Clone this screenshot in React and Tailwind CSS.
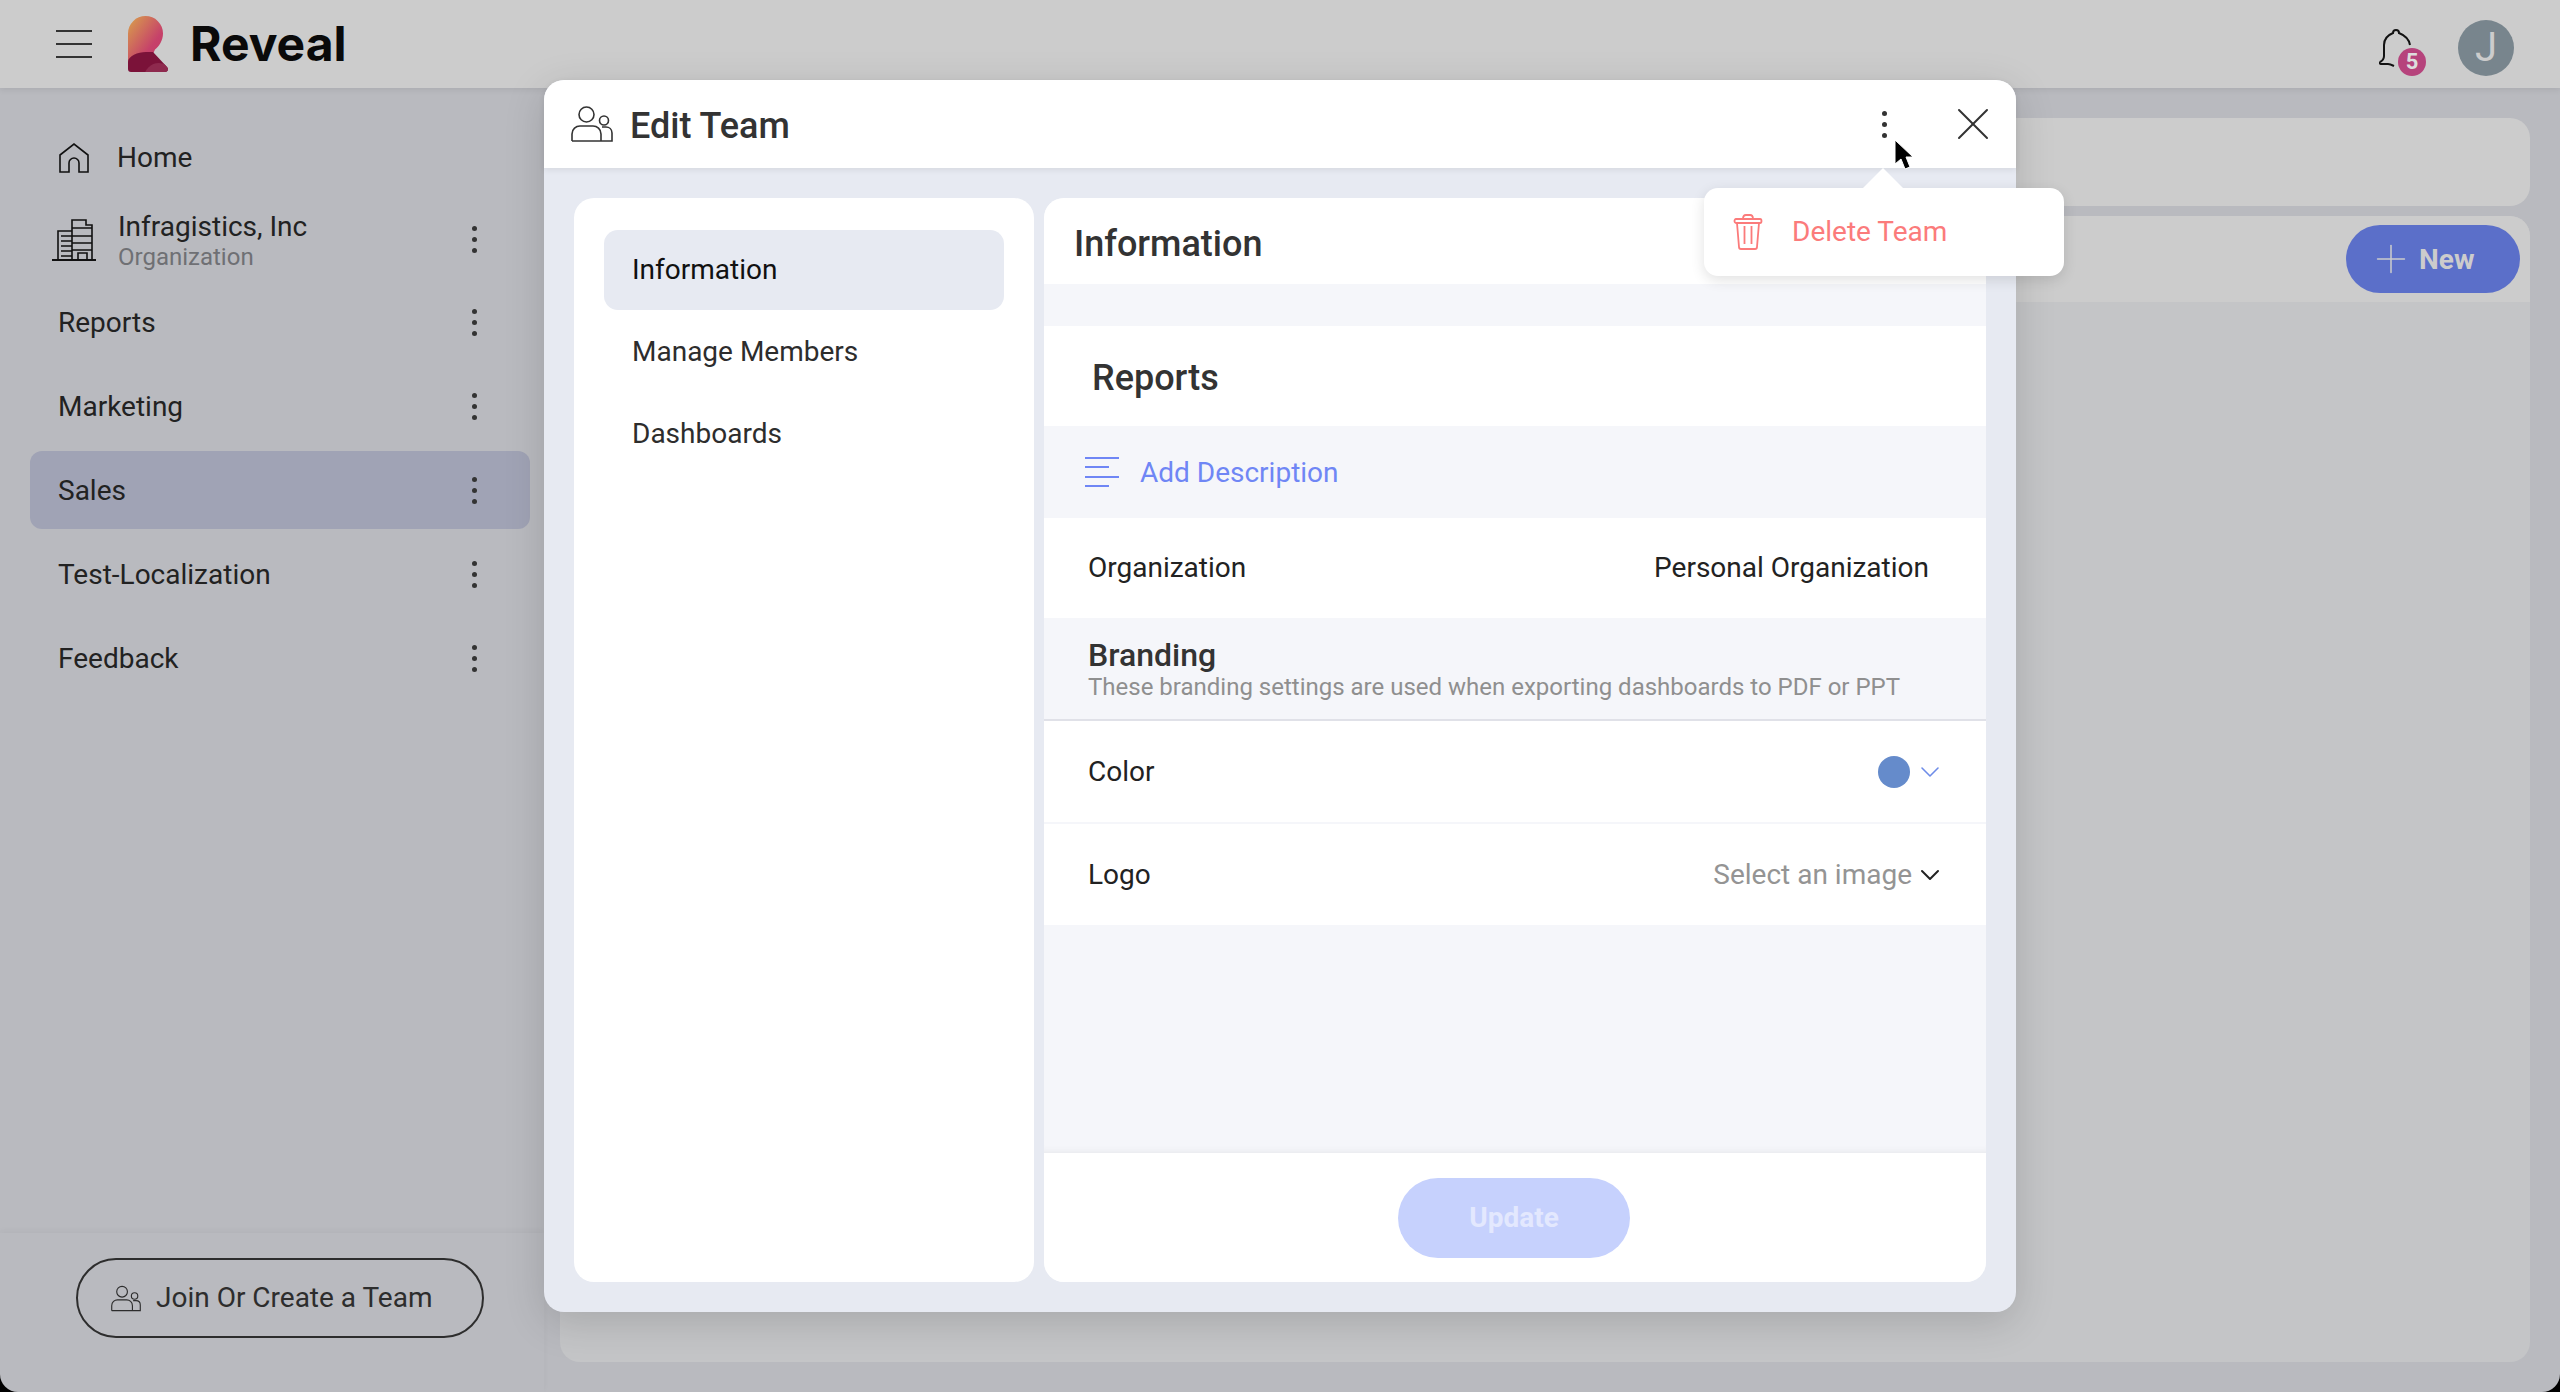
import React from "react";
import { Plus, X, ChevronDown } from "lucide-react";

const Dots = ({ color = "bg-[#333333]" }) => (
  <div className="flex flex-col gap-[6px]">
    <span className={`w-[5px] h-[5px] rounded-full ${color}`} />
    <span className={`w-[5px] h-[5px] rounded-full ${color}`} />
    <span className={`w-[5px] h-[5px] rounded-full ${color}`} />
  </div>
);

const PeopleIcon = ({ className }) => (
  <svg viewBox="0 0 42 36" fill="none" stroke="currentColor" strokeWidth="1.6" className={className}>
    <circle cx="15.5" cy="8.5" r="7.5" />
    <circle cx="33" cy="14.5" r="4.5" />
    <path d="M1 35h40v-8c0-4-3-6-6-6h-4M1 35v-7c0-5 4-8 8-8h13c4 0 8 3 8 8v7" />
  </svg>
);

const BuildingIcon = () => (
  <svg viewBox="0 0 44 42" fill="none" stroke="#111111" strokeWidth="1.6" className="w-[44px] h-[42px]">
    <path d="M0 41h44" strokeWidth="2" />
    <path d="M6 41V12h14M20 41V1h14v5h6v35" />
    <path d="M9 17h11M9 22h11M9 27h11M9 32h11M9 37h11M20 9h20M20 17h20M20 24h20M20 31h20" />
    <path d="M26 41v-7h9v7" />
  </svg>
);

const Logo = () => (
  <svg viewBox="0 0 40 56" className="w-[40px] h-[56px]">
    <defs>
      <linearGradient id="logoTop" x1="0" y1="0" x2="1" y2="1">
        <stop offset="0" stopColor="#d9a24a" />
        <stop offset="0.65" stopColor="#c6416a" />
        <stop offset="1" stopColor="#c23a63" />
      </linearGradient>
      <clipPath id="logoClip">
        <path d="M0 46C0 40 10 36 18 36h7l14 15c2 2 1 5-2 5H3c-2 0-3-1-3-3z" />
      </clipPath>
    </defs>
    <path d="M0 48V17.500a17.500 17.500 0 0 1 35 0c0 7-4 13-8 16L25 38H10z" fill="url(#logoTop)" />
    <path d="M0 46C0 40 10 36 18 36h7l14 15c2 2 1 5-2 5H3c-2 0-3-1-3-3z" fill="#7b1239" />
    <g clipPath="url(#logoClip)">
      <circle cx="31" cy="62" r="15" fill="#8e2a4e" />
    </g>
  </svg>
);

const Bell = () => (
  <svg viewBox="0 0 34 38" fill="none" stroke="#111111" strokeWidth="2" className="w-[34px] h-[38px]">
    <path d="M1 33c2-1 4-3 4-6V16C5 10 9 6 14 4c0-2 1-3 3-3s3 1 3 3c5 2 10 6 11 12" />
    <path d="M1 33c-1 1 0 2 1 2h7c2 0 4 1 6 2" />
  </svg>
);

const TrashIcon = () => (
  <svg viewBox="0 0 30 36" fill="none" stroke="#fb7b7b" strokeWidth="1.8" className="w-[30px] h-[36px]">
    <path d="M10 5c0-3 1-4 3-4h4c2 0 3 1 3 4" />
    <path d="M3 5h24c2 0 2 4 0 4H3c-2 0-2-4 0-4z" />
    <path d="M4 9l2 24c0 1 1 2 2 2h14c1 0 2-1 2-2l2-24M11.500 12v18M18.500 12v18" />
  </svg>
);

const sideRows = ["Reports", "Marketing", "Sales", "Test-Localization", "Feedback"];

const Sidebar = () => (
  <aside className="w-[544px] shrink-0 flex flex-col">
    <div className="flex-1 pt-[27px] pl-[30px] pr-[14px]">
      <div className="h-[84px] flex items-center pl-[29px] pt-[2px] gap-[28px]">
        <svg viewBox="0 0 30 30" fill="none" stroke="#111111" strokeWidth="1.6" className="w-[30px] h-[30px]">
          <path d="M1 29V12L15 1l14 11v17h-9v-9a5 5 0 0 0-10 0v9z" />
        </svg>
        <span className="text-[28px] text-[#222222]">Home</span>
      </div>
      <div className="h-[81px] flex items-center">
        <div className="ml-[22px] w-[44px]">
          <BuildingIcon />
        </div>
        <div className="ml-[22px] flex flex-col flex-1 pt-[3px]">
          <span className="text-[28px] leading-[32px] text-[#222222]">Infragistics, Inc</span>
          <span className="text-[24px] leading-[28px] text-[#6f7074]">Organization</span>
        </div>
        <div className="mr-[53px]">
          <Dots />
        </div>
      </div>
      <div className="mt-[3px] flex flex-col gap-[6px]">
        {sideRows.map((name) => (
          <div
            key={name}
            className={`h-[78px] flex items-center justify-between pl-[28px] pr-[53px] rounded-[12px] ${
              name === "Sales" ? "bg-[#a0a3b5]" : ""
            }`}
          >
            <span className="text-[28px] text-[#222222] pt-[1px]">{name}</span>
            <Dots />
          </div>
        ))}
      </div>
    </div>
    <div className="h-[159px] shrink-0 flex items-start pt-[25px] pl-[76px] shadow-[0_-2px_6px_rgba(0,0,0,0.04)]">
      <div className="w-[408px] h-[80px] rounded-full border-2 border-[#2d2d2d] flex items-center pl-[33px] gap-[15px] text-[#2d2d2d]">
        <PeopleIcon className="w-[30px] h-[27px]" />
        <span className="text-[28px]">Join Or Create a Team</span>
      </div>
    </div>
  </aside>
);

const Dialog = () => (
  <div className="absolute z-20 left-[544px] top-[80px] w-[1472px] h-[1232px] rounded-[20px] bg-[#e7eaf2] flex flex-col shadow-[0_10px_40px_rgba(0,0,0,0.15)]">
    <div className="h-[88px] shrink-0 rounded-t-[20px] bg-white flex items-center pl-[27px] shadow-[0_2px_6px_rgba(0,0,0,0.08)] text-[#333333]">
      <PeopleIcon className="w-[42px] h-[36px]" />
      <span className="ml-[17px] pt-[3px] text-[36px] font-medium">Edit Team</span>
      <div className="ml-auto mr-[58px]">
        <Dots />
      </div>
      <X className="w-[56px] h-[56px] mr-[15px]" strokeWidth={0.85} />
    </div>
    <div className="flex-1 flex gap-[10px] p-[30px] min-h-0">
      <div className="w-[460px] shrink-0 rounded-[20px] bg-white px-[30px] pt-[32px] flex flex-col gap-[2px]">
        <div className="h-[80px] rounded-[14px] bg-[#e7eaf2] flex items-center pl-[28px] text-[28px] text-[#111111]">
          Information
        </div>
        <div className="h-[80px] flex items-center pl-[28px] text-[28px] text-[#2d2d2d]">Manage Members</div>
        <div className="h-[80px] flex items-center pl-[28px] text-[28px] text-[#2d2d2d]">Dashboards</div>
      </div>
      <div className="flex-1 rounded-[20px] bg-[#f5f6fa] flex flex-col overflow-hidden">
        <div className="h-[86px] shrink-0 bg-white flex items-center pl-[30px] pt-[5px] text-[36px] font-medium text-[#333333]">
          Information
        </div>
        <div className="h-[42px] shrink-0" />
        <div className="h-[100px] shrink-0 bg-white flex items-center pl-[48px] pt-[3px] text-[36px] font-medium text-[#333333]">
          Reports
        </div>
        <div className="h-[92px] shrink-0 flex items-center pl-[41px] gap-[21px] text-[#6f86f5]">
          <svg viewBox="0 0 34 30" fill="none" stroke="currentColor" strokeWidth="2" className="w-[34px] h-[30px]">
            <path d="M0 1h34M0 10h24M0 20h34M0 29h24" />
          </svg>
          <span className="text-[28px] pt-[1px]">Add Description</span>
        </div>
        <div className="h-[100px] shrink-0 bg-white flex items-center justify-between pl-[44px] pr-[57px] text-[28px] text-[#222222]">
          <span>Organization</span>
          <span>Personal Organization</span>
        </div>
        <div className="h-[103px] shrink-0 border-b-2 border-[#e0e1e8] pl-[44px] flex flex-col justify-center">
          <span className="text-[32px] leading-[36px] font-medium text-[#333333]">Branding</span>
          <span className="text-[24px] leading-[28px] text-[#8f8f8f]">
            These branding settings are used when exporting dashboards to PDF or PPT
          </span>
        </div>
        <div className="h-[101px] shrink-0 bg-white flex items-center pl-[44px] pr-[40px] text-[28px] text-[#222222]">
          <span>Color</span>
          <span className="ml-auto w-[32px] h-[32px] rounded-full bg-[#658bcb]" />
          <ChevronDown className="ml-[4px] w-[32px] h-[32px] text-[#6e8ce8]" strokeWidth={1.2} />
        </div>
        <div className="h-[101px] shrink-0 bg-white mt-[2px] flex items-center pl-[44px] pr-[40px] text-[28px] text-[#222222]">
          <span>Logo</span>
          <span className="ml-auto text-[#949494]">Select an image</span>
          <ChevronDown className="ml-[2px] w-[32px] h-[32px] text-[#222222]" strokeWidth={1.5} />
        </div>
        <div className="flex-1 shadow-[inset_0_-8px_8px_-8px_rgba(0,0,0,0.08)]" />
        <div className="h-[129px] shrink-0 bg-white flex items-center justify-center pr-[2px]">
          <div className="w-[232px] h-[80px] rounded-[40px] bg-[#c6d1fd] flex items-center justify-center text-[28px] font-bold text-[#e3e8fe]">
            Update
          </div>
        </div>
      </div>
    </div>
  </div>
);

const DeleteMenu = () => (
  <div className="absolute z-30 left-[1704px] top-[188px] w-[360px] h-[88px] rounded-[14px] bg-white flex items-center pl-[29px] gap-[29px] shadow-[0_4px_14px_rgba(0,0,0,0.12)]">
    <div className="absolute left-[159px] -top-[20px] w-0 h-0 border-l-[20px] border-r-[20px] border-b-[20px] border-l-transparent border-r-transparent border-b-white" />
    <TrashIcon />
    <span className="text-[28px] text-[#fb7b7b]">Delete Team</span>
  </div>
);

const Cursor = () => (
  <svg viewBox="0 0 20 32" className="absolute z-30 left-[1894px] top-[139px] w-[20px] h-[32px]">
    <path d="M1 1v24l6-5 4 10 5-2-4-10h7z" fill="#000000" stroke="#ffffff" strokeWidth="1" />
  </svg>
);

export default function App() {
  return (
    <div className="relative w-[2560px] h-[1392px] overflow-hidden bg-black font-['Roboto',sans-serif]">
      <div className="w-full h-full rounded-b-[18px] overflow-hidden bg-[#b9babf] flex flex-col">
        <header className="h-[88px] shrink-0 bg-[#cccccc] flex items-center shadow-[0_2px_6px_rgba(0,0,0,0.08)] z-10">
          <div className="ml-[56px] w-[36px] flex flex-col gap-[11px]">
            <span className="h-[2px] bg-[#333333]" />
            <span className="h-[2px] bg-[#333333]" />
            <span className="h-[2px] bg-[#333333]" />
          </div>
          <div className="ml-[36px]">
            <Logo />
          </div>
          <span className="ml-[22px] text-[48px] leading-none font-bold text-[#0a0a0a] font-['Inter',sans-serif]">
            Reveal
          </span>
          <div className="ml-auto relative mr-[45px] mt-[7px]">
            <Bell />
            <span className="absolute left-[19px] top-[19px] w-[28px] h-[28px] rounded-full bg-[#b6437c] text-[#dddddd] text-[22px] font-bold flex items-center justify-center">
              5
            </span>
          </div>
          <div className="mr-[46px] mt-[8px] w-[56px] h-[56px] rounded-full bg-[#78858d] text-[#cccccc] text-[40px] flex items-center justify-center">
            J
          </div>
        </header>
        <div className="flex-1 flex min-h-0">
          <Sidebar />
          <main className="flex-1 ml-[16px] mr-[30px] pt-[30px] pb-[30px] flex flex-col gap-[10px]">
            <div className="h-[88px] shrink-0 rounded-[20px] bg-[#cccccc]" />
            <div className="flex-1 rounded-[20px] bg-[#c4c5c7] overflow-hidden">
              <div className="h-[86px] bg-[#cccccc] flex items-center justify-end pr-[10px]">
                <div className="w-[174px] h-[68px] rounded-full bg-[#5b6fc9] flex items-center pl-[22px] gap-[5px] text-[#cccccc]">
                  <Plus className="w-[46px] h-[46px]" strokeWidth={0.8} />
                  <span className="text-[28px] font-bold pt-[1px]">New</span>
                </div>
              </div>
            </div>
          </main>
        </div>
      </div>
      <Dialog />
      <DeleteMenu />
      <Cursor />
    </div>
  );
}
